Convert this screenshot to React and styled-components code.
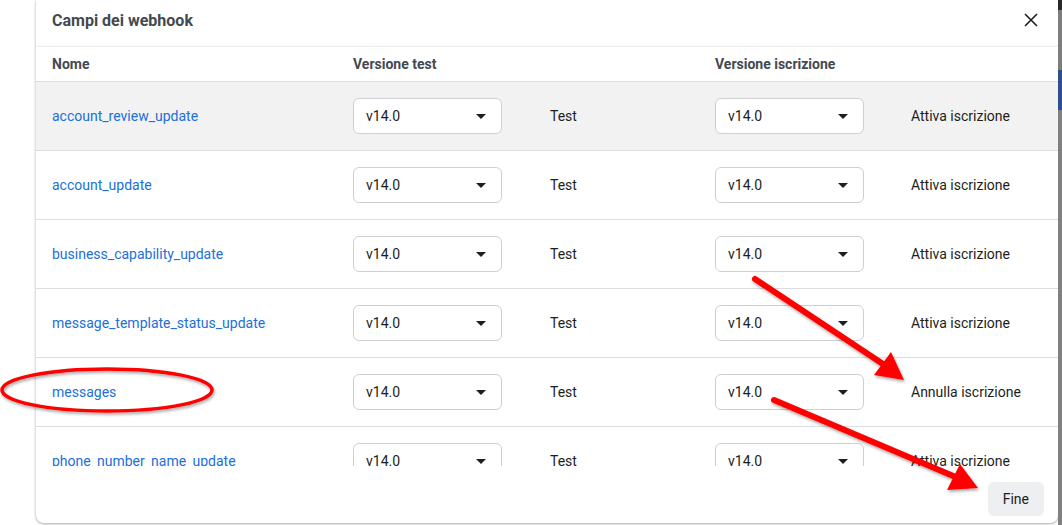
import React from 'react';
import styled, { createGlobalStyle } from 'styled-components';

const GlobalStyle = createGlobalStyle`
  html, body {
    margin: 0;
    padding: 0;
    background: #fff;
    font-family: Roboto, "Liberation Sans", sans-serif;
    overflow: hidden;
  }
`;

const Page = styled.div`
  position: relative;
  display: flex;
  width: 1062px;
  height: 525px;
  padding-left: 36px;
  box-sizing: border-box;
`;

const Dialog = styled.div`
  width: 1022px;
  height: 523px;
  background: #fff;
  border-radius: 0 0 8px 8px;
  box-shadow: 0 1px 3px rgba(0, 0, 0, 0.35);
  display: flex;
  flex-direction: column;
  overflow: hidden;
`;

const Backdrop = styled.div`
  flex: 1;
  background: linear-gradient(
    to bottom,
    #2a2a2a 0px,
    #2a2a2a 10px,
    #7d7d7d 10px,
    #7d7d7d 70px,
    #2c4f8e 70px,
    #2c4f8e 110px,
    #808080 110px
  );
`;

const TitleBar = styled.div`
  height: 46px;
  display: flex;
  align-items: center;
  justify-content: space-between;
  padding: 0 20px 0 16px;
  box-sizing: border-box;
`;

const Title = styled.h2`
  margin: 0;
  font-size: 16px;
  font-weight: 700;
  color: #444950;
  position: relative;
  top: -3px;
`;

const CloseButton = styled.button`
  border: none;
  background: none;
  padding: 0;
  display: flex;
  color: #1c1e21;
  position: relative;
  top: -3px;
  cursor: pointer;
`;

const Row = styled.div`
  display: grid;
  grid-template-columns: 301px 197px 165px 196px 1fr;
  align-items: center;
  box-sizing: border-box;
  padding-left: 16px;
  height: ${({ head }) => (head ? '36px' : '69px')};
  flex-shrink: 0;
  background: ${({ active }) => (active ? '#f2f2f2' : '#fff')};
  border-bottom: 1px solid #dadde1;
  ${({ head }) =>
    head &&
    `
    border-top: 1px solid #ebedf0;
    box-shadow: 0 -1px 2px rgba(0,0,0,0.04);
  `}
`;

const HeadCell = styled.div`
  font-size: 14px;
  font-weight: 700;
  color: #444950;
`;

const Body = styled.div`
  height: 384px;
  overflow: hidden;
  display: flex;
  flex-direction: column;
`;

const FieldLink = styled.a`
  font-size: 14px;
  color: #216fdb;
  text-decoration: none;
`;

const Label = styled.span`
  font-size: 14px;
  color: #1c1e21;
`;

const Select = styled.div`
  width: 149px;
  height: 36px;
  box-sizing: border-box;
  border: 1px solid #ccd0d5;
  border-radius: 6px;
  background: #fff;
  display: flex;
  align-items: center;
  justify-content: space-between;
  padding: 0 15px 0 12px;
  font-size: 14px;
  color: #1c1e21;
`;

const Caret = styled.span`
  width: 0;
  height: 0;
  border-left: 5.5px solid transparent;
  border-right: 5.5px solid transparent;
  border-top: 5.5px solid #1c1e21;
`;

const Footer = styled.div`
  flex: 1;
  display: flex;
  justify-content: flex-end;
  align-items: flex-start;
  padding: 16px 14px 0 0;
`;

const DoneButton = styled.button`
  height: 34px;
  padding: 0 15px;
  border: none;
  border-radius: 6px;
  background: #eeeff0;
  font-family: inherit;
  font-size: 14px;
  color: #1c1e21;
  cursor: pointer;
`;

const Annotations = styled.svg`
  position: absolute;
  left: 0;
  top: 0;
  pointer-events: none;
`;

const fields = [
  { name: 'account_review_update', action: 'Attiva iscrizione', active: true },
  { name: 'account_update', action: 'Attiva iscrizione' },
  { name: 'business_capability_update', action: 'Attiva iscrizione' },
  { name: 'message_template_status_update', action: 'Attiva iscrizione' },
  { name: 'messages', action: 'Annulla iscrizione' },
  { name: 'phone_number_name_update', action: 'Attiva iscrizione' },
];

const VersionSelect = () => (
  <Select>
    <span>v14.0</span>
    <Caret />
  </Select>
);

export default function App() {
  return (
    <Page>
      <GlobalStyle />
      <Dialog>
        <TitleBar>
          <Title>Campi dei webhook</Title>
          <CloseButton aria-label="Chiudi">
            <svg width="14" height="14" viewBox="0 0 14 14">
              <path d="M1 1L13 13M13 1L1 13" stroke="#1c1e21" strokeWidth="1.6" />
            </svg>
          </CloseButton>
        </TitleBar>
        <Row head>
          <HeadCell>Nome</HeadCell>
          <HeadCell>Versione test</HeadCell>
          <div />
          <HeadCell>Versione iscrizione</HeadCell>
          <div />
        </Row>
        <Body>
          {fields.map((f) => (
            <Row key={f.name} active={f.active}>
              <FieldLink href="#">{f.name}</FieldLink>
              <VersionSelect />
              <Label>Test</Label>
              <VersionSelect />
              <Label>{f.action}</Label>
            </Row>
          ))}
        </Body>
        <Footer>
          <DoneButton>Fine</DoneButton>
        </Footer>
      </Dialog>
      <Backdrop />

      {/* red markup drawn over the screenshot */}
      <Annotations width="1062" height="525">
        <defs>
          <filter id="shadow" x="-10%" y="-10%" width="120%" height="130%">
            <feDropShadow dx="1" dy="2" stdDeviation="1.5" floodColor="#000" floodOpacity="0.35" />
          </filter>
        </defs>
        <g filter="url(#shadow)" fill="#ff0000">
          <ellipse cx="107" cy="390" rx="105" ry="21" fill="none" stroke="#ff0000" strokeWidth="3.5" />
          <path d="M755 279 L886 366" stroke="#ff0000" strokeWidth="6" strokeLinecap="round" />
          <polygon points="904,380 874,375 891,352" />
          <path d="M774 400 L958 478" stroke="#ff0000" strokeWidth="6" strokeLinecap="round" />
          <polygon points="978,488 947,490 960,464" />
        </g>
      </Annotations>
    </Page>
  );
}
